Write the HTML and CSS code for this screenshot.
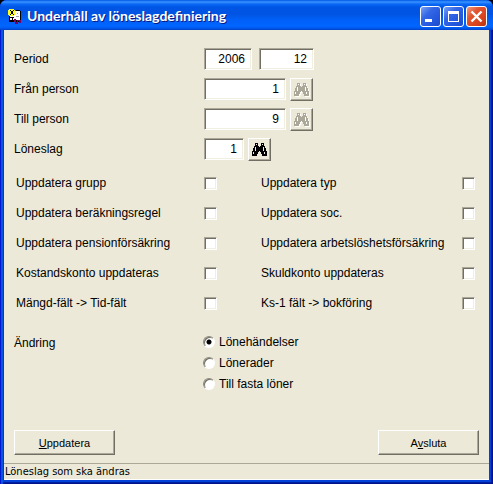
FILE: index.html
```html
<!DOCTYPE html>
<html lang="sv">
<head>
<meta charset="utf-8">
<title>Underhåll av löneslagdefiniering</title>
<link rel="stylesheet" href="styles.css">
</head>
<body>
<svg class="defs" aria-hidden="true">
  <symbol id="binoculars" viewBox="0 0 15 13">
    <path d="M3 0h3v1h-3zM9 0h3v1h-3zM3 1h1v1h-1zM5 1h1v1h-1zM9 1h1v1h-1zM11 1h1v1h-1zM3 2h3v1h-3zM9 2h3v1h-3zM2 3h5v1h-5zM8 3h5v1h-5zM2 4h1v4h-1zM4 4h7v4h-7zM12 4h1v4h-1zM1 5h1v3h-1zM13 5h1v3h-1zM0 8h1v5h-1zM1 8h5v1h-5zM2 9h4v2h-4zM1 11h4v2h-4zM9 8h6v1h-6zM9 9h3v2h-3zM13 9h2v2h-2zM10 11h5v2h-5zM6 8h1v1h-1zM8 8h1v1h-1z"/>
  </symbol>
</svg>
<div class="window">
  <header class="titlebar">
    <svg class="app-icon" viewBox="0 -1 14 16" shape-rendering="crispEdges" aria-hidden="true">
      <path fill="#000" d="M1 4h11v9H1z"/>
      <path fill="#fff" d="M2 6h10v5H2zM8 2h3v4H8z"/>
      <path fill="#000" d="M12 2h1v9h-1zM8 1h4v1H8zM2 8h4v1H2zM4 9h1v3H4z"/>
      <path fill="#fff" d="M7 2h5v8H7z"/>
      <path fill="#a0a0a0" d="M9 4h1v1H9zM8 7h3v1H8z"/>
      <path fill="#ffff20" d="M1 0h5v1h1v5H6v1H1V6H0V1h1z"/>
      <path fill="#000" d="M2 1h1v1H2zM5 1h1v1H5zM3 2h2v3H3zM2 5h1v1H2zM5 5h1v1H5z"/>
      <path fill="#800060" d="M6 10h2v3h1v-2h4v3h-2v-2h-1v3H7v-2H6z"/>
    </svg>
    <h1 class="title">Underhåll av löneslagdefiniering</h1>
    <div class="caption-buttons">
      <button class="caption" type="button" aria-label="Minimera"><svg viewBox="0 0 19 19"><path fill="#fff" d="M4 12h7v3H4z"/></svg></button>
      <button class="caption" type="button" aria-label="Maximera"><svg viewBox="0 0 19 19"><path fill="#fff" fill-rule="evenodd" d="M4 4h11v11H4zM5 7v7h9V7z"/></svg></button>
      <button class="caption close" type="button" aria-label="Stäng"><svg viewBox="0 0 19 19"><path fill="none" stroke="#fff" stroke-width="2.4" d="M4.500 4.500l10 10M14.500 4.500l-10 10"/></svg></button>
    </div>
  </header>
  <form class="client">
    <div class="fields">
      <div class="field"><label for="year">Period</label><input class="box year" id="year" value="2006"><input class="box month" aria-label="Månad" value="12"></div>
      <div class="field"><label for="from">Från person</label><input class="box person" id="from" value="1"><button class="find" type="button" disabled aria-label="Sök från person"><svg><use href="#binoculars"/></svg></button></div>
      <div class="field"><label for="to">Till person</label><input class="box person" id="to" value="9"><button class="find" type="button" disabled aria-label="Sök till person"><svg><use href="#binoculars"/></svg></button></div>
      <div class="field"><label for="kind">Löneslag</label><input class="box kind" id="kind" value="1"><button class="find" type="button" aria-label="Sök löneslag"><svg><use href="#binoculars"/></svg></button></div>
    </div>
    <div class="checks">
      <label class="check">Uppdatera grupp<input type="checkbox"></label>
      <label class="check">Uppdatera typ<input type="checkbox"></label>
      <label class="check">Uppdatera beräkningsregel<input type="checkbox"></label>
      <label class="check">Uppdatera soc.<input type="checkbox"></label>
      <label class="check">Uppdatera pensionförsäkring<input type="checkbox"></label>
      <label class="check">Uppdatera arbetslöshetsförsäkring<input type="checkbox"></label>
      <label class="check">Kostandskonto uppdateras<input type="checkbox"></label>
      <label class="check">Skuldkonto uppdateras<input type="checkbox"></label>
      <label class="check">Mängd-fält -&gt; Tid-fält<input type="checkbox"></label>
      <label class="check">Ks-1 fält -&gt; bokföring<input type="checkbox"></label>
    </div>
    <div class="change" role="radiogroup" aria-labelledby="change-label">
      <span class="change-label" id="change-label">Ändring</span>
      <div class="radios">
        <label class="radio"><input type="radio" name="change" checked>Lönehändelser</label>
        <label class="radio"><input type="radio" name="change">Lönerader</label>
        <label class="radio"><input type="radio" name="change">Till fasta löner</label>
      </div>
    </div>
    <div class="actions">
      <button class="action" type="button"><u>U</u>ppdatera</button>
      <button class="action" type="button">A<u>v</u>sluta</button>
    </div>
  </form>
  <footer class="status">Löneslag som ska ändras</footer>
</div>
</body>
</html>
```
FILE: styles.css
```css
* {
  box-sizing: border-box;
}

body {
  margin: 0;
  background: #000;
  color: #000;
  font: 12px/16px "Liberation Sans", Arial, sans-serif;
}

.defs {
  position: absolute;
  width: 0;
  height: 0;
}

.window {
  display: flex;
  flex-direction: column;
  min-height: 100vh;
  padding: 0 4px 4px;
  border-radius: 7px 7px 0 0;
  background: #0831d9;
  box-shadow: inset 1px 0 #0019cf, inset 3px 0 #0855dd, inset -1px -1px #00138c, inset -2px -2px #001ea0, inset -4px -4px #0441d8;
}

.titlebar {
  display: flex;
  align-items: center;
  height: 30px;
  margin: 0 -4px;
  padding: 2px 6px 0 8px;
  border-radius: 7px 7px 0 0;
  background: linear-gradient(#0058e6 0, #3a93ff 2px, #0a6af5 4px, #0055e5 7px, #0054e3 14px, #0060f8 20px, #0066ff 26px, #005bf0 28px, #0040c8 30px);
}

.app-icon {
  width: 14px;
  height: 16px;
}

.title {
  flex: 1;
  margin: 0 0 0 5px;
  color: #fff;
  font: bold 14px/20px Lato, sans-serif;
  text-shadow: 1px 1px #0a1883;
  white-space: nowrap;
}

.caption-buttons {
  display: flex;
  gap: 2px;
}

.caption {
  width: 21px;
  height: 21px;
  padding: 0;
  border: 1px solid #fff;
  border-radius: 3px;
  background: linear-gradient(135deg, #7aa2f5, #3467e6 35%, #2357dd 70%, #1c4cc8);
}

.caption.close {
  background: linear-gradient(135deg, #f09a80, #e2532f 35%, #d9431d 70%, #b83210);
}

.caption svg {
  display: block;
  width: 19px;
  height: 19px;
}

.client {
  display: flex;
  flex: 1;
  flex-direction: column;
  padding: 14px 10px 8px;
  background: #ece9d8;
}

.field {
  display: flex;
  align-items: center;
  height: 30px;
}

.field label {
  width: 190px;
}

.box {
  height: 22px;
  margin: 0 7px 0 0;
  padding: 0 6px 0 0;
  border: 1px solid;
  border-color: #aca899 #fff #fff #aca899;
  border-radius: 0;
  outline: 0;
  background: #fff;
  box-shadow: inset 1px 1px #716f64, inset -1px -1px #f1efe2;
  color: #000;
  font: 12px/16px "Liberation Sans", Arial, sans-serif;
  text-align: right;
}

.year {
  width: 48px;
}

.month {
  width: 55px;
}

.person {
  width: 82px;
  margin-right: 4px;
}

.kind {
  width: 40px;
  margin-right: 4px;
}

.find,
.action {
  border: 1px solid;
  border-color: #fff #716f64 #716f64 #fff;
  border-radius: 0;
  background: #ece9d8;
  box-shadow: inset -1px -1px #aca899;
  color: #000;
}

.find {
  display: grid;
  place-items: center;
  width: 23px;
  height: 23px;
  padding: 0;
}

.find svg {
  width: 15px;
  height: 13px;
  shape-rendering: crispEdges;
}

.find:disabled svg {
  fill: #aca899;
  filter: drop-shadow(1px 1px #fff);
}

.checks {
  display: grid;
  grid-template-columns: 201px 1fr;
  column-gap: 44px;
  margin: 4px 4px 0 2px;
}

.check {
  display: flex;
  align-items: center;
  justify-content: space-between;
  height: 30px;
  white-space: nowrap;
}

.check input {
  width: 13px;
  height: 13px;
  margin: 0;
  border: 1px solid;
  border-color: #aca899 #fff #fff #aca899;
  appearance: none;
  background: #fff;
  box-shadow: inset 1px 1px #716f64, inset -1px -1px #f1efe2;
}

.check input:checked {
  background: #fff radial-gradient(#000 3px, #fff 3px);
}

.change {
  display: flex;
  margin-top: 13px;
}

.change-label {
  width: 189px;
  padding-top: 4px;
}

.radio {
  display: flex;
  align-items: center;
  gap: 4px;
  height: 21px;
}

.radio input {
  width: 12px;
  height: 12px;
  margin: 0;
  border: 1px solid;
  border-color: #8d897c #fff #fff #8d897c;
  border-radius: 50%;
  appearance: none;
  background: #fff;
  box-shadow: inset 1px 1px #716f64;
}

.radio input:checked {
  background: #fff radial-gradient(circle, #000 2px, #fff 3px);
}

.actions {
  display: flex;
  justify-content: space-between;
  margin-top: auto;
}

.action {
  width: 101px;
  height: 25px;
  padding: 0;
  font: 11px/16px "Liberation Sans", Arial, sans-serif;
}

.status {
  height: 17px;
  padding-left: 1px;
  border-top: 1px solid #aca899;
  border-bottom: 1px solid #fff;
  background: #ece9d8;
  font: 11px/16px "DejaVu Sans Condensed", "DejaVu Sans", sans-serif;
}
```
